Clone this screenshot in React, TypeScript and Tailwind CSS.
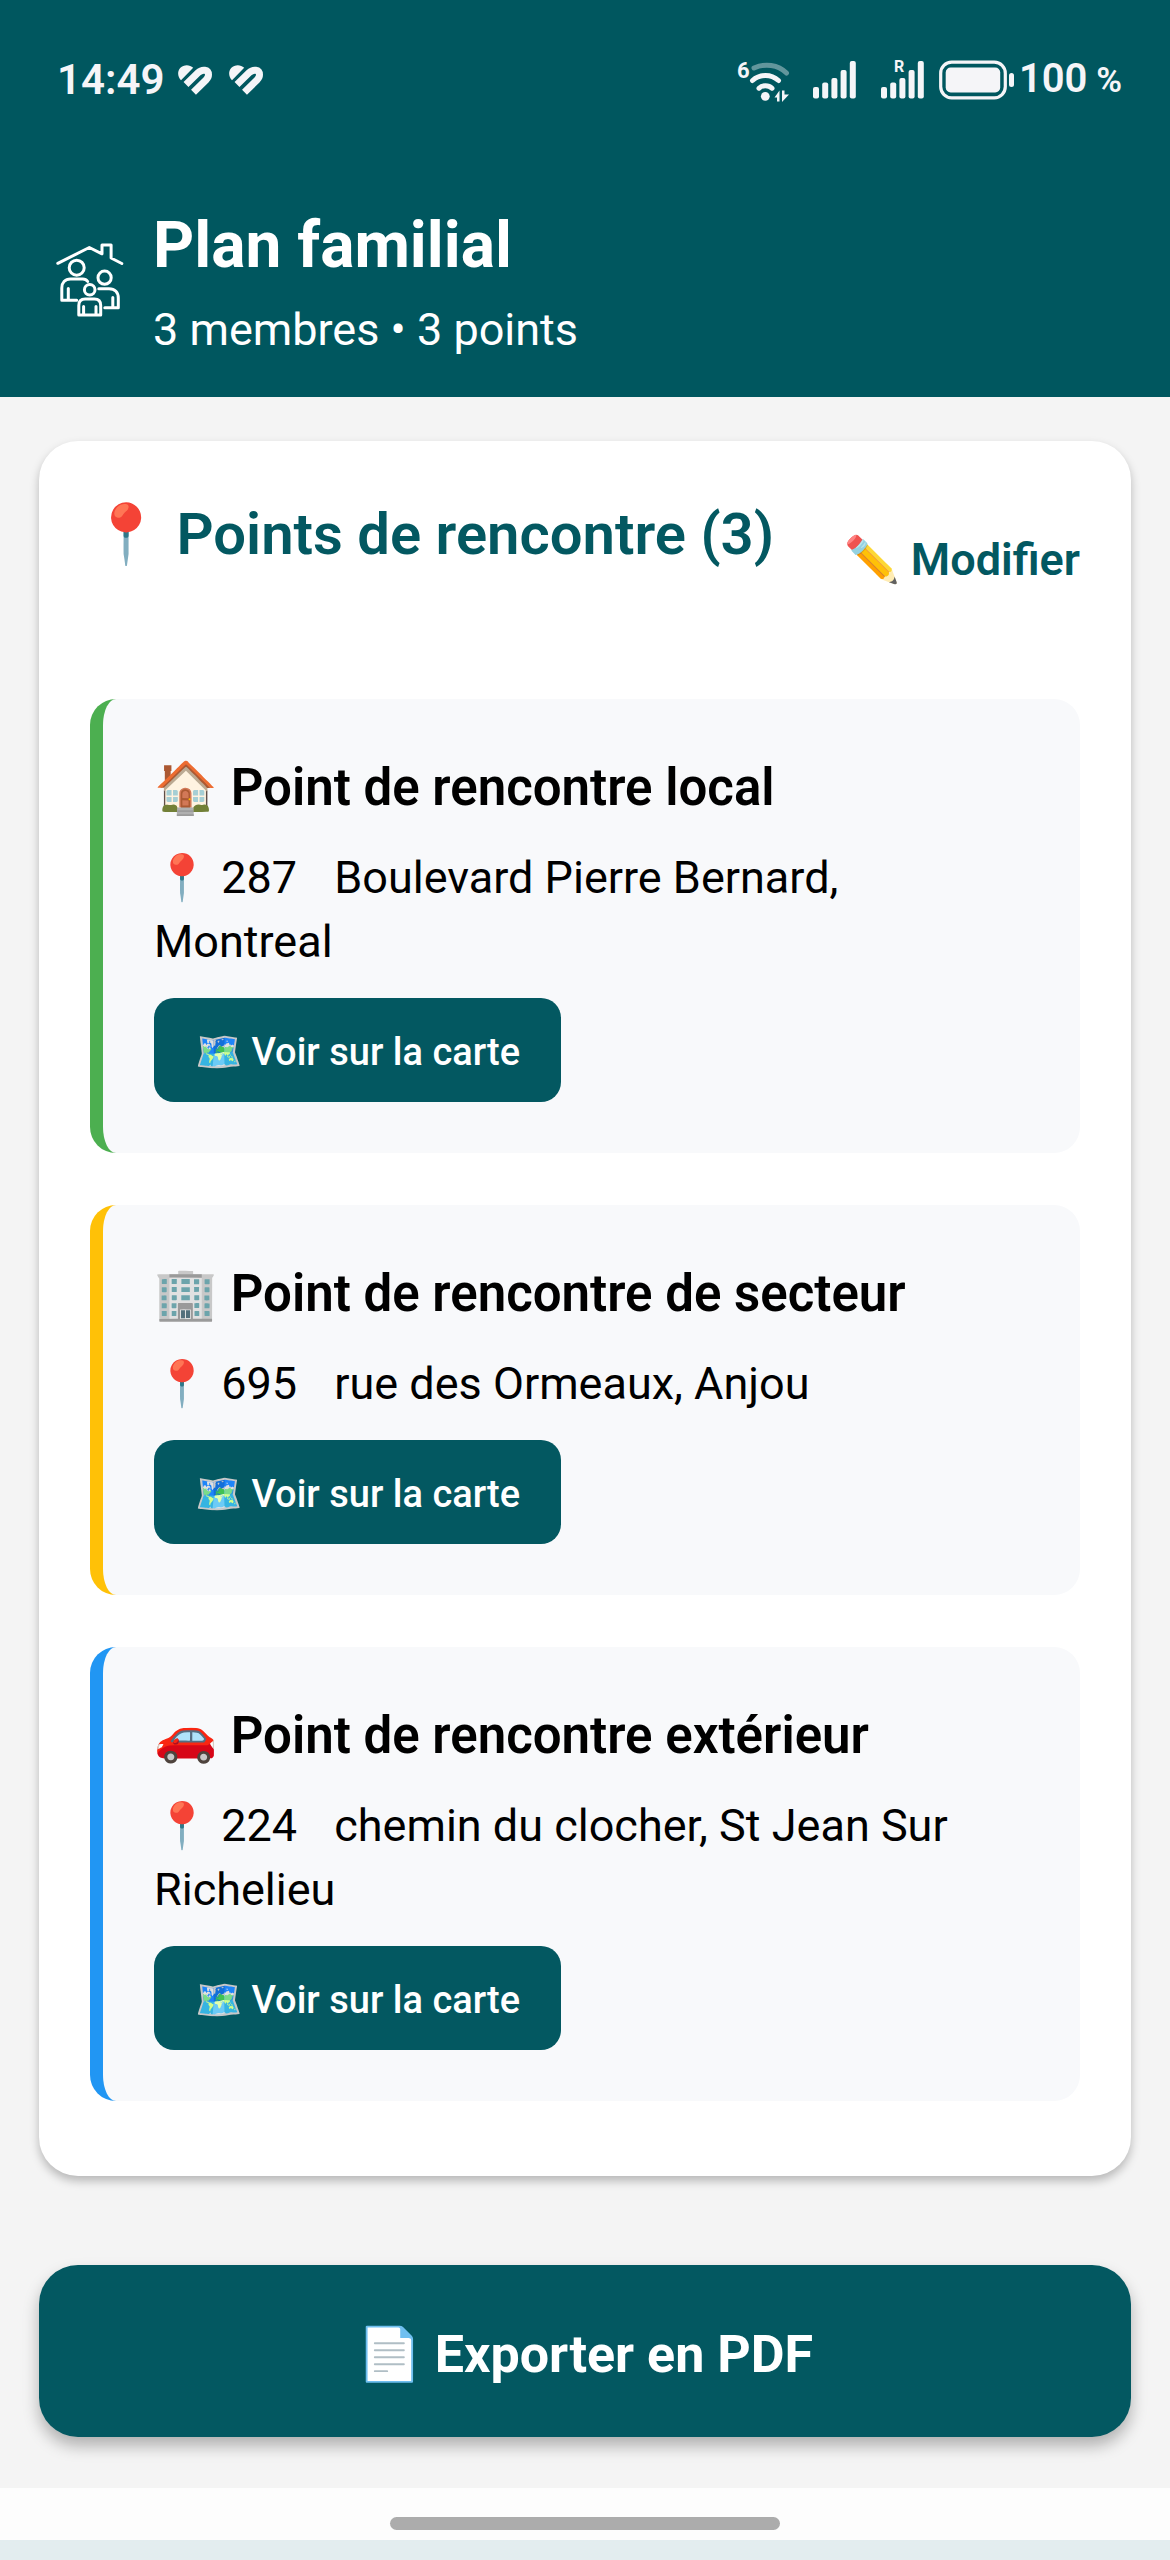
import React from 'react';

const points = [
  {
    id: 'local',
    icon: '🏠',
    title: 'Point de rencontre local',
    number: '287',
    street: 'Boulevard Pierre Bernard, Montreal',
    border: 'border-[#4caf50]',
  },
  {
    id: 'secteur',
    icon: '🏢',
    title: 'Point de rencontre de secteur',
    number: '695',
    street: 'rue des Ormeaux, Anjou',
    border: 'border-[#ffc107]',
  },
  {
    id: 'exterieur',
    icon: '🚗',
    title: 'Point de rencontre extérieur',
    number: '224',
    street: 'chemin du clocher, St Jean Sur Richelieu',
    border: 'border-[#2196f3]',
  },
];

const HeartIcon: React.FC = () => (
  <svg width="34" height="30" viewBox="0 0 34 30" fill="none" aria-hidden="true">
    <path d="M15.2 2.8C11.5 -1 5.5 -0.5 2.4 2.8C-0.8 6.2 -0.6 11.5 3 15.2Z" fill="currentColor" />
    <path
      d="M8 19.5L20 7.8C24 3.9 30.5 4.2 30.5 9.8C30.5 12 29.5 13.5 28 15L15.5 27.3"
      stroke="currentColor"
      strokeWidth="7"
    />
  </svg>
);

const WifiIcon: React.FC = () => (
  <svg width="57" height="50" viewBox="0 0 57 50" fill="none" className="overflow-visible" aria-hidden="true">
    <text x="3" y="23" fontSize="22" fontWeight="700" fill="currentColor">6</text>
    <g stroke="currentColor" strokeWidth="5" strokeLinecap="round">
      <path d="M20 13C31 8 44 9.5 52.5 18" opacity="0.4" />
      <path d="M18.5 25.500C26 18.800 37 18.800 44.500 25.500" />
      <path d="M25 33.200C28.500 29.800 34.500 29.800 38 33.200" />
    </g>
    <circle cx="31.300" cy="41.300" r="4.400" fill="currentColor" />
    <path d="M40.500 42.500L45.500 35.500V46.500H43V42.500Z" fill="currentColor" />
    <path d="M48 35.500H50.500V39.500H55L48 47Z" fill="currentColor" />
  </svg>
);

const SignalIcon: React.FC<{ roaming?: boolean }> = ({ roaming }) => (
  <svg width="44" height="40" viewBox="0 0 44 40" fill="currentColor" className="overflow-visible" aria-hidden="true">
    {roaming && (
      <text x="13" y="12" fontSize="16" fontWeight="700">R</text>
    )}
    <rect x="0" y="27" width="6" height="11.500" rx="2" />
    <rect x="9.200" y="22.500" width="6" height="16" rx="2" />
    <rect x="18.400" y="18" width="6" height="20.500" rx="2" />
    <rect x="27.600" y="10" width="6" height="28.500" rx="2" />
    <rect x="36.800" y="1" width="6" height="37.500" rx="2" />
  </svg>
);

const BatteryIcon: React.FC = () => (
  <svg width="76" height="40" viewBox="0 0 76 40" fill="none" aria-hidden="true">
    <rect x="1.700" y="2.200" width="64.600" height="35.600" rx="11" stroke="currentColor" strokeWidth="3.200" />
    <rect x="6.700" y="7.500" width="54.500" height="25" rx="5" fill="currentColor" />
    <rect x="70" y="13" width="5" height="14" rx="2.500" fill="currentColor" />
  </svg>
);

const FamilyIcon: React.FC = () => (
  <svg
    width="70"
    height="84"
    viewBox="0 0 70 84"
    fill="none"
    stroke="currentColor"
    strokeWidth="3"
    strokeLinecap="round"
    strokeLinejoin="round"
    className="shrink-0"
    aria-hidden="true"
  >
    <path d="M2.800 20.300L34.300 4.500L47 10.800V2H56.100V15L66.800 20.500" />
    <circle cx="21.700" cy="24.700" r="7.500" />
    <circle cx="49.600" cy="34.700" r="6.600" />
    <circle cx="34.700" cy="46.700" r="5.300" />
    <path d="M32.700 38.500C31.500 36.800 30 36 27.800 36H15.500C10 36 6.800 39.800 6.800 45V57.300H21.700M13.300 45.500V57" />
    <path d="M43.800 45.700H54C60 45.700 63.300 49.500 63.300 55V64.700H49.800M57.800 54.500V64" />
    <path d="M23.800 72V62.500C23.800 58.300 26.300 56 30.200 56H39.400C43.300 56 45.700 58.300 45.700 62.500V72ZM28.600 63.500V71M41 63.500V71" />
  </svg>
);

const App: React.FC = () => {
  return (
    <div className="min-h-screen flex flex-col bg-[#f4f4f4] font-['Roboto',sans-serif] text-black">
      <header className="bg-[#00575f] text-white pb-[35px]">
        {/* Status bar */}
        <div className="flex justify-between items-center h-12 mt-14 pl-[57px] pr-12 text-[#f5f5f8] font-semibold">
          <div className="flex items-center gap-[14px]">
            <span className="text-[42px] leading-[48px]">14:49</span>
            <div className="flex items-center gap-[17px]">
              <HeartIcon />
              <HeartIcon />
            </div>
          </div>
          <div className="flex items-center">
            <WifiIcon />
            <div className="flex items-center gap-6 ml-[22px] mr-[14px]">
              <SignalIcon />
              <SignalIcon roaming />
            </div>
            <BatteryIcon />
            <span className="ml-1 text-[40px] leading-[48px]">
              100<span className="text-[35px]"> %</span>
            </span>
          </div>
        </div>

        {/* Page title */}
        <div className="flex items-center gap-7 px-[55px] pt-[103px]">
          <FamilyIcon />
          <div>
            <h1 className="text-[64px] leading-[78px] font-bold">Plan familial</h1>
            <p className="mt-[13px] text-[45px] leading-[64px]">3 membres • 3 points</p>
          </div>
        </div>
      </header>

      <main className="px-[39px] pt-[44px] pb-[51px]">
        <section className="bg-white rounded-[39px] px-[51px] pt-[51px] pb-[75px] shadow-[0_5px_10px_rgba(0,0,0,0.25)]">
          <div className="flex justify-between items-center text-[#035861]">
            <h2 className="mb-[51px] text-[58px] leading-[84px] font-semibold">📍 Points de rencontre (3)</h2>
            <button type="button" className="text-[45px] leading-[64px] font-semibold">
              ✏️ Modifier
            </button>
          </div>

          <ul className="flex flex-col gap-[52px] mt-[72px]">
            {points.map((point) => (
              <li
                key={point.id}
                className={`${point.border} border-l-[13px] bg-[#f8f9fb] rounded-[26px] p-[51px]`}
              >
                <h3 className="text-[51px] leading-[76px] font-semibold">
                  {point.icon} {point.title}
                </h3>
                <p className="mt-5 pr-3 text-[45px] leading-[64px]">
                  📍 <span className="mr-[26px]">{point.number}</span> {point.street}
                </p>
                <button
                  type="button"
                  className="block mt-6 h-[104px] px-[41px] pt-1 rounded-[20px] bg-[#035861] text-white text-[38px] font-medium"
                >
                  🗺️ Voir sur la carte
                </button>
              </li>
            ))}
          </ul>
        </section>

        <button
          type="button"
          className="mt-[89px] w-full h-[172px] pt-2 rounded-[39px] bg-[#035861] text-white text-[52px] font-bold shadow-[0_9px_16px_rgba(0,0,0,0.28)]"
        >
          📄 Exporter en PDF
        </button>
      </main>

      {/* Gesture bar */}
      <div className="flex justify-center bg-[#fdfdfd] pt-[29px] pb-[10px]">
        <div className="w-1/3 h-[13px] rounded-full bg-[#acacac]" />
      </div>
      <div className="flex-1 bg-[#e3edef]" />
    </div>
  );
};

export default App;
